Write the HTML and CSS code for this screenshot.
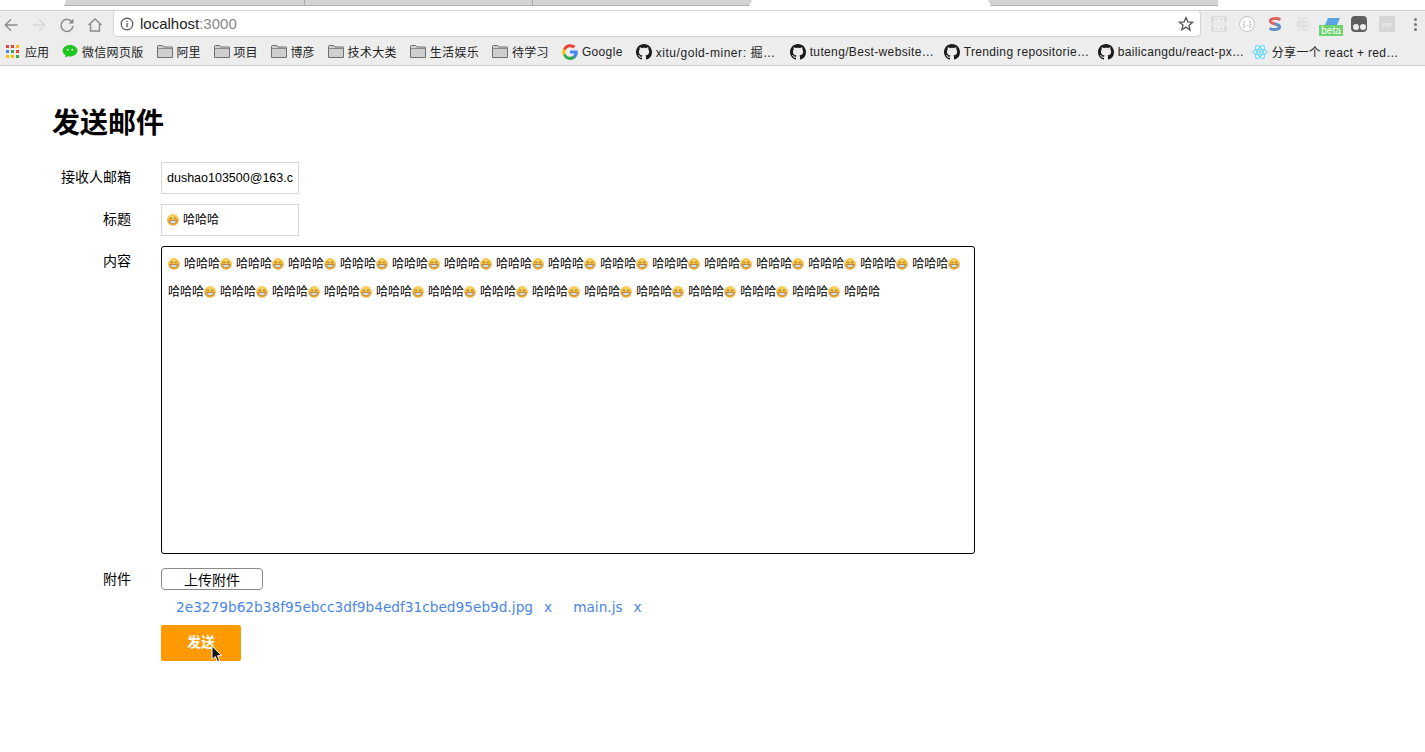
FILE: index.html
```html
<!DOCTYPE html>
<html lang="zh-CN">
<head>
    <meta charset="UTF-8">
    <title>发送邮件</title>
    <link rel="stylesheet" href="styles.css">
</head>
<body>

    <svg class="defs" width="0" height="0">
        <symbol id="grin" viewBox="0 0 12 12">
            <circle cx="6" cy="6" r="5.800" fill="#f3a92f"/>
            <path d="M.6 5.500a5.400 5.200 0 0 1 10.800 0z" fill="#fbcf55"/>
            <path d="M2.600 4.800l1.100-1.100 1.100 1.100M7.200 4.800l1.100-1.100 1.100 1.100" fill="none" stroke="#6b4a14" stroke-width=".9"/>
            <path d="M2.400 6.500h7.200a3.600 3.200 0 0 1-7.200 0z" fill="#fff" stroke="#7c5a20" stroke-width=".6"/>
            <path d="M2.800 7.900h6.400" stroke="#8c8c8c" stroke-width=".5"/>
        </symbol>
        <symbol id="folder" viewBox="0 0 16 13">
            <path d="M.5 12.500v-11a1 1 0 0 1 1-1h4l1.500 1.500h8a.5.5 0 0 1 .5.5v10z" fill="#cfcfcf" stroke="#6f6f6f"/>
            <path d="M.5 3.500h15" stroke="#8a8a8a"/>
        </symbol>
        <symbol id="github" viewBox="0 0 16 16">
            <path d="M8 0C3.580 0 0 3.580 0 8c0 3.540 2.290 6.530 5.470 7.590.4.070.55-.17.55-.38 0-.19-.01-.82-.01-1.490-2.010.37-2.530-.49-2.690-.94-.09-.23-.48-.94-.82-1.130-.28-.15-.68-.52-.01-.53.630-.01 1.080.580 1.230.820.720 1.210 1.870.870 2.330.660.070-.520.280-.870.510-1.070-1.780-.200-3.640-.890-3.640-3.950 0-.870.310-1.590.820-2.150-.080-.200-.360-1.020.080-2.120 0 0 .670-.210 2.200.820.640-.180 1.320-.270 2-.270s1.360.090 2 .270c1.530-1.040 2.200-.820 2.200-.820.440 1.100.160 1.920.080 2.120.510.560.820 1.270.820 2.150 0 3.070-1.870 3.750-3.650 3.950.290.250.540.730.540 1.480 0 1.070-.010 1.930-.010 2.200 0 .210.150.460.550.380A8.010 8.010 0 0 0 16 8c0-4.420-3.580-8-8-8z" fill="#1b1b1b"/>
        </symbol>
        <symbol id="atom" viewBox="0 0 16 16">
            <g fill="none" stroke="currentColor" stroke-width="1">
                <ellipse cx="8" cy="8" rx="7.200" ry="2.800"/>
                <ellipse cx="8" cy="8" rx="7.200" ry="2.800" transform="rotate(60 8 8)"/>
                <ellipse cx="8" cy="8" rx="7.200" ry="2.800" transform="rotate(120 8 8)"/>
            </g>
            <circle cx="8" cy="8" r="1.400" fill="currentColor"/>
        </symbol>
    </svg>

    <div class="tabstrip">
        <div class="tab tab-1"></div>
        <div class="tab tab-2"></div>
        <div class="tab tab-3"></div>
        <div class="tab-active"></div>
        <div class="tab tab-4"></div>
    </div>

    <div class="toolbar">
        <div class="nav-icons">
            <svg class="nav-icon" viewBox="0 0 16 16"><path d="M14.500 8H2M8 2.200L2.200 8 8 13.800" fill="none" stroke="#8a8a8a" stroke-width="1.300"/></svg>
            <svg class="nav-icon" viewBox="0 0 16 16"><path d="M1.500 8H14M8 2.200L13.800 8 8 13.800" fill="none" stroke="#d6d6d6" stroke-width="1.300"/></svg>
            <svg class="nav-icon" viewBox="0 0 16 16"><path d="M13.300 5.500A6 6 0 1 0 14 9" fill="none" stroke="#8a8a8a" stroke-width="1.500"/><path d="M14.500 1.500v5h-5z" fill="#8a8a8a"/></svg>
            <svg class="nav-icon" viewBox="0 0 16 16"><path d="M1.500 8L8 2l6.500 6M3.500 7v7h9V7" fill="none" stroke="#8a8a8a" stroke-width="1.400"/></svg>
        </div>
        <div class="omnibox">
            <svg class="info-icon" viewBox="0 0 14 14"><circle cx="7" cy="7" r="5.800" fill="none" stroke="#555" stroke-width="1.200"/><path d="M7 6v4.200M7 3.700v1.300" stroke="#555" stroke-width="1.300"/></svg>
            <span class="url">localhost<span class="url-port">:3000</span></span>
            <svg class="star-icon" viewBox="0 0 16 16"><path d="M8 1.500l1.900 4.400 4.700.4-3.600 3.100 1.100 4.700L8 11.100l-4.100 2.500L5 8.900 1.400 6.300l4.700-.4z" fill="none" stroke="#555" stroke-width="1.300"/></svg>
        </div>
        <div class="extensions">
            <span class="ext"><span class="ext-box"><svg class="ext-svg ext-atom"><use href="#atom"/></svg></span></span>
            <span class="ext"><span class="ext-round">{..}</span></span>
            <span class="ext">
                <svg class="ext-svg ext-s" viewBox="0 0 16 16">
                    <path d="M13.500 3.500C9 1.500 3 2.500 3.500 5.500c.3 1.500 2.500 2 4.500 2.500" fill="none" stroke="#e0605a" stroke-width="3"/>
                    <path d="M8 8c2 .5 4.200 1 4.500 2.500.5 3-5.500 4-10 2" fill="none" stroke="#5b8ec9" stroke-width="3"/>
                </svg>
            </span>
            <span class="ext"><svg class="ext-svg ext-atom ext-atom-plain"><use href="#atom"/></svg></span>
            <span class="ext"><span class="beta-top"></span><span class="beta-label">beta</span></span>
            <span class="ext"><span class="ext-ghost"><i></i><i></i></span></span>
            <span class="ext"><span class="ext-rp">RP</span></span>
            <span class="ext"><span class="ext-menu"><i></i><i></i><i></i></span></span>
        </div>
    </div>

    <div class="bookmarks">
        <div class="bookmark">
            <span class="apps">
                <i class="c1"></i><i class="c2"></i><i class="c3"></i>
                <i class="c4"></i><i class="c5"></i><i class="c6"></i>
                <i class="c7"></i><i class="c8"></i><i class="c9"></i>
            </span>应用
        </div>
        <div class="bookmark bm-wide">
            <svg class="bm-icon bm-wechat" viewBox="0 0 16 14"><path d="M8 0c4.400 0 8 2.700 8 6.200s-3.600 6.200-8 6.200c-.9 0-1.800-.1-2.600-.3L2.800 13.600l.5-2.600C1.300 9.900 0 8.200 0 6.200 0 2.700 3.600 0 8 0z" fill="#1ec61e"/><circle cx="5.500" cy="5" r="1" fill="#fff"/><circle cx="10.500" cy="5" r="1" fill="#fff"/></svg>微信网页版
        </div>
        <div class="bookmark"><svg class="bm-icon"><use href="#folder"/></svg>阿里</div>
        <div class="bookmark"><svg class="bm-icon"><use href="#folder"/></svg>项目</div>
        <div class="bookmark"><svg class="bm-icon"><use href="#folder"/></svg>博彦</div>
        <div class="bookmark bm-wide"><svg class="bm-icon"><use href="#folder"/></svg>技术大类</div>
        <div class="bookmark bm-wide"><svg class="bm-icon"><use href="#folder"/></svg>生活娱乐</div>
        <div class="bookmark bm-wide"><svg class="bm-icon"><use href="#folder"/></svg>待学习</div>
        <div class="bookmark bm-latin">
            <svg class="bm-icon bm-square" viewBox="0 0 16 16">
                <path d="M15.700 8.200c0-.6-.05-1.100-.15-1.600H8v3h4.400a3.700 3.700 0 0 1-1.600 2.500v2h2.600c1.500-1.400 2.300-3.400 2.300-5.900z" fill="#4285f4"/>
                <path d="M8 16c2.200 0 4-.7 5.400-2l-2.600-2c-.7.500-1.700.8-2.800.8-2.100 0-3.900-1.400-4.600-3.400H1.300v2.100A8 8 0 0 0 8 16z" fill="#34a853"/>
                <path d="M3.400 9.400a4.800 4.800 0 0 1 0-3V4.300H1.300a8 8 0 0 0 0 7.200z" fill="#fbbc05"/>
                <path d="M8 3.200c1.200 0 2.300.4 3.100 1.200l2.300-2.300A8 8 0 0 0 1.300 4.300l2.100 2.100C4.100 4.600 5.900 3.200 8 3.200z" fill="#ea4335"/>
            </svg>Google
        </div>
        <div class="bookmark bm-latin bm-long bm-xitu"><svg class="bm-icon bm-square"><use href="#github"/></svg>xitu/gold-miner: 掘…</div>
        <div class="bookmark bm-latin bm-long"><svg class="bm-icon bm-square"><use href="#github"/></svg>tuteng/Best-website…</div>
        <div class="bookmark bm-latin bm-long"><svg class="bm-icon bm-square"><use href="#github"/></svg>Trending repositorie…</div>
        <div class="bookmark bm-latin bm-long"><svg class="bm-icon bm-square"><use href="#github"/></svg>bailicangdu/react-px…</div>
        <div class="bookmark bm-latin bm-long"><svg class="bm-icon bm-square bm-react"><use href="#atom"/></svg>分享一个 react + red…</div>
    </div>

    <div class="page">
        <h1 class="title">发送邮件</h1>

        <div class="row row-email">
            <label class="row-label">接收人邮箱</label>
            <div class="field">dushao103500@163.c</div>
        </div>

        <div class="row row-subject">
            <label class="row-label">标题</label>
            <div class="field field-subject"><svg class="emoji"><use href="#grin"/></svg>哈哈哈</div>
        </div>

        <div class="row row-content">
            <label class="row-label">内容</label>
            <div class="editor">
                <div class="editor-line"><svg class="emoji"><use href="#grin"/></svg>哈哈哈<svg class="emoji"><use href="#grin"/></svg>哈哈哈<svg class="emoji"><use href="#grin"/></svg>哈哈哈<svg class="emoji"><use href="#grin"/></svg>哈哈哈<svg class="emoji"><use href="#grin"/></svg>哈哈哈<svg class="emoji"><use href="#grin"/></svg>哈哈哈<svg class="emoji"><use href="#grin"/></svg>哈哈哈<svg class="emoji"><use href="#grin"/></svg>哈哈哈<svg class="emoji"><use href="#grin"/></svg>哈哈哈<svg class="emoji"><use href="#grin"/></svg>哈哈哈<svg class="emoji"><use href="#grin"/></svg>哈哈哈<svg class="emoji"><use href="#grin"/></svg>哈哈哈<svg class="emoji"><use href="#grin"/></svg>哈哈哈<svg class="emoji"><use href="#grin"/></svg>哈哈哈<svg class="emoji"><use href="#grin"/></svg>哈哈哈<svg class="emoji"><use href="#grin"/></svg></div>
                <div class="editor-line"><!-- 1 -->哈哈哈<svg class="emoji"><use href="#grin"/></svg><!-- 2 -->哈哈哈<svg class="emoji"><use href="#grin"/></svg><!-- 3 -->哈哈哈<svg class="emoji"><use href="#grin"/></svg><!-- 4 -->哈哈哈<svg class="emoji"><use href="#grin"/></svg><!-- 5 -->哈哈哈<svg class="emoji"><use href="#grin"/></svg><!-- 6 -->哈哈哈<svg class="emoji"><use href="#grin"/></svg><!-- 7 -->哈哈哈<svg class="emoji"><use href="#grin"/></svg><!-- 8 -->哈哈哈<svg class="emoji"><use href="#grin"/></svg><!-- 9 -->哈哈哈<svg class="emoji"><use href="#grin"/></svg><!-- 10 -->哈哈哈<svg class="emoji"><use href="#grin"/></svg><!-- 11 -->哈哈哈<svg class="emoji"><use href="#grin"/></svg><!-- 12 -->哈哈哈<svg class="emoji"><use href="#grin"/></svg><!-- 13 -->哈哈哈<svg class="emoji"><use href="#grin"/></svg><!-- 14 -->哈哈哈</div>
            </div>
        </div>

        <div class="row row-attach">
            <label class="row-label">附件</label>
            <button class="upload-btn">上传附件</button>
        </div>

        <div class="files">
            <a class="file-name">2e3279b62b38f95ebcc3df9b4edf31cbed95eb9d.jpg</a>
            <a class="file-remove">x</a>
            <a class="file-name">main.js</a>
            <a class="file-remove">x</a>
        </div>

        <div class="send-wrap">
            <button class="send-btn">发送</button>
            <svg class="cursor" viewBox="0 0 12 18"><path d="M1 1v13.500l3.300-3 2.200 5 2.200-1-2.200-4.800H10.500z" fill="#111" stroke="#fff" stroke-width="1"/></svg>
        </div>
    </div>

</body>
</html>
```

FILE: styles.css
```css
* {
    box-sizing: border-box;
}

body {
    margin: 0;
    font-family: "Liberation Sans", "Noto Sans CJK SC", sans-serif;
    font-size: 13px;
    color: #000;
    background-color: #fff;
    overflow: hidden;
}

.defs {
    position: absolute;
}

/* browser chrome */
.tabstrip {
    display: flex;
    height: 10px;
    padding-left: 64px;
    background-color: #fff;
}

.tab {
    height: 6px;
    background-color: #d4d4d4;
    border-bottom: 1px solid #b0b0b0;
}

.tab-1 {
    width: 241px;
    clip-path: polygon(2px 0, 100% 0, 100% 100%, 0 100%);
    border-right: 1px solid #aaa;
}

.tab-2 {
    width: 228px;
    border-right: 1px solid #aaa;
}

.tab-3 {
    width: 219px;
    clip-path: polygon(0 0, 100% 0, calc(100% - 3px) 100%, 0 100%);
}

.tab-active {
    width: 236px;
}

.tab-4 {
    width: 230px;
    clip-path: polygon(0 0, 100% 0, 100% 100%, 3px 100%);
}

.toolbar {
    display: flex;
    align-items: center;
    height: 28px;
    padding-left: 3px;
    background-color: #ededed;
    border-top: 1px solid #d4d4d4;
}

.nav-icons {
    display: flex;
    flex: none;
    gap: 12px;
    width: 110px;
}

.nav-icon {
    width: 16px;
    height: 16px;
}

.omnibox {
    display: flex;
    flex: none;
    align-items: center;
    align-self: flex-start;
    width: 1088px;
    height: 27px;
    margin-top: -1px;
    padding: 0 6px;
    background-color: #fff;
    border: 1px solid #d4d4d4;
    border-radius: 4px;
}

.info-icon {
    width: 14px;
    height: 14px;
    margin-right: 6px;
}

.url {
    flex: 1;
    font-size: 15px;
    color: #222;
}

.url-port {
    color: #888;
}

.star-icon {
    width: 16px;
    height: 16px;
}

.extensions {
    display: flex;
    flex: none;
    align-items: center;
    margin: -1px 0 0 4px;
}

.ext {
    display: flex;
    align-items: center;
    justify-content: center;
    width: 28px;
    height: 26px;
    position: relative;
}

.ext-box {
    display: flex;
    background-color: #dcdcdc;
    border-radius: 2px;
}

.ext-svg {
    width: 16px;
    height: 16px;
}

.ext-atom {
    color: #f5f5f5;
}

.ext-atom-plain {
    color: #dedede;
}

.ext-round {
    width: 16px;
    height: 16px;
    font-size: 7px;
    line-height: 14px;
    text-align: center;
    color: #999;
    background-color: #fff;
    border: 1px solid #c4c4c4;
    border-radius: 50%;
}

.beta-top {
    position: absolute;
    top: 7px;
    left: 8px;
    width: 15px;
    height: 7px;
    background-color: #5aa5e6;
    clip-path: polygon(3px 0, 100% 0, calc(100% - 3px) 100%, 0 100%);
}

.beta-label {
    position: absolute;
    top: 14px;
    left: 2px;
    width: 24px;
    height: 11px;
    font-size: 10px;
    line-height: 11px;
    text-align: center;
    color: #fff;
    background-color: #6fd36f;
}

.ext-ghost {
    display: flex;
    align-items: flex-end;
    justify-content: center;
    gap: 1px;
    width: 16px;
    height: 16px;
    padding-bottom: 2px;
    background-color: #5e5e5e;
    border-radius: 4px;
}

.ext-ghost i {
    width: 6px;
    height: 6px;
    background-color: #eee;
    border-radius: 50%;
}

.ext-rp {
    width: 16px;
    height: 16px;
    padding-top: 6px;
    font-size: 7px;
    text-align: center;
    color: #f4f4f4;
    background-color: #d6d6d6;
}

.ext-menu {
    display: flex;
    flex-direction: column;
    gap: 2px;
}

.ext-menu i {
    width: 3px;
    height: 3px;
    background-color: #777;
    border-radius: 50%;
}

.bookmarks {
    display: flex;
    align-items: center;
    gap: 13px;
    height: 28px;
    padding-left: 6px;
    background-color: #ededed;
    border-bottom: 1px solid #cfcfcf;
    white-space: nowrap;
    font-size: 12px;
    color: #222;
}

.bookmark {
    display: flex;
    flex: none;
    align-items: center;
}

.bm-wide {
    letter-spacing: .3px;
}

.bm-latin {
    letter-spacing: .35px;
}

.bm-long {
    width: 141px;
}

.bm-xitu {
    letter-spacing: .55px;
}

.apps {
    display: grid;
    grid-template-columns: repeat(3, 3px);
    gap: 2px;
    margin-right: 6px;
}

.apps i {
    width: 3px;
    height: 3px;
}

.c1 { background-color: #ea4335; }
.c2 { background-color: #ea4335; }
.c3 { background-color: #fbbc05; }
.c4 { background-color: #4285f4; }
.c5 { background-color: #34a853; }
.c6 { background-color: #ea4335; }
.c7 { background-color: #fbbc05; }
.c8 { background-color: #fbbc05; }
.c9 { background-color: #34a853; }

.bm-icon {
    flex: none;
    width: 16px;
    height: 13px;
    margin-right: 4px;
}

.bm-square {
    height: 16px;
}

.bm-react {
    color: #61dafb;
}

/* form */
.page {
    padding: 39px 0 0 52px;
}

.title {
    margin: 0 0 19px;
    font-size: 28px;
    line-height: 38px;
    font-weight: bold;
}

.row {
    display: flex;
    margin-left: -52px;
}

.row-label {
    width: 131px;
    margin-right: 30px;
    text-align: right;
    font-size: 14px;
}

.row-email,
.row-subject {
    height: 32px;
    margin-bottom: 10px;
    line-height: 30px;
}

.row-content {
    margin-bottom: 14px;
}

.row-content .row-label {
    padding-top: 4px;
}

.field {
    width: 138px;
    height: 32px;
    padding: 0 5px;
    border: 1px solid #d8d8d8;
    font-size: 12.5px;
    overflow: hidden;
    white-space: nowrap;
}

.field-subject {
    font-size: 12px;
}

.editor {
    width: 814px;
    height: 308px;
    padding: 3px 6px;
    border: 1px solid #000;
    border-radius: 3px;
    font-size: 12px;
    line-height: 28px;
}

.editor-line {
    white-space: nowrap;
}

.emoji {
    width: 12px;
    height: 12px;
    margin-right: 4px;
    vertical-align: -2px;
}

.row-attach {
    height: 22px;
}

.upload-btn {
    width: 102px;
    height: 22px;
    padding: 0 0 1px;
    font-family: inherit;
    font-size: 14px;
    background-color: #fff;
    border: 1px solid #8a8a8a;
    border-radius: 4px;
}

.files {
    display: flex;
    margin: 6px 0 0 124px;
    line-height: 22px;
    font-family: "DejaVu Sans", sans-serif;
    font-size: 13.7px;
    color: #4a86e8;
}

.file-name {
    margin-right: 11px;
}

.file-remove {
    margin-right: 21px;
}

.send-wrap {
    position: relative;
    width: 80px;
    margin: 7px 0 0 109px;
}

.send-btn {
    display: block;
    width: 80px;
    height: 36px;
    padding: 0 0 4px;
    font-family: inherit;
    font-size: 14px;
    font-weight: bold;
    color: #fff;
    background-color: #ff9900;
    border: none;
    border-radius: 2px;
}

.cursor {
    position: absolute;
    left: 50px;
    top: 20px;
    width: 12px;
    height: 18px;
}
```
